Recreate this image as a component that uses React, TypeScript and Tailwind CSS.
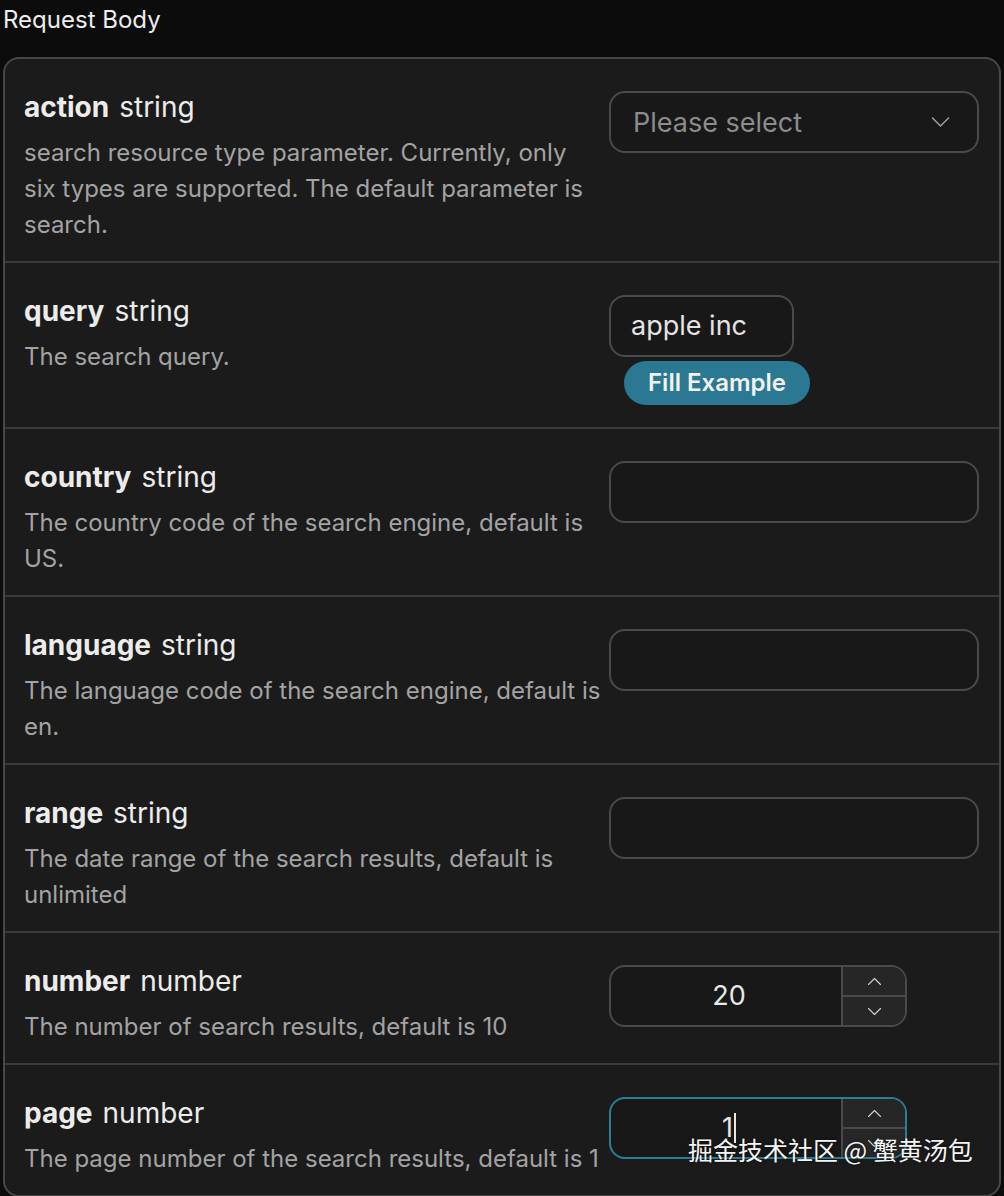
import React from "react";

const font = { fontFamily: 'Inter, "Noto Sans", "Liberation Sans", sans-serif' };

function Chevron({ up = false, className = "" }: { up?: boolean; className?: string }) {
  return (
    <svg className={className} viewBox="0 0 20 12" fill="none" stroke="currentColor" strokeWidth="1.5" strokeLinecap="round" strokeLinejoin="round">
      {up ? <path d="M2 10 L10 2 L18 10" /> : <path d="M2 2 L10 10 L18 2" />}
    </svg>
  );
}

function Row({
  name,
  type,
  desc,
  children,
  last = false,
}: {
  name: string;
  type: string;
  desc: string;
  children: React.ReactNode;
  last?: boolean;
}) {
  return (
    <div className={`flex pl-[19px] pr-[20px] ${last ? "" : "border-b-2 border-[#3a3a3a]"}`}>
      <div className="w-[579px] shrink-0 pt-[30px] pb-[18px]">
        <div className="text-[28px] leading-[36px] text-[#ececec]">
          <span className="font-bold">{name}</span>
          <span className="ml-[10px]">{type}</span>
        </div>
        <div className="mt-[10px] text-[24px] leading-[36px] text-[#a3a3a3]">{desc}</div>
      </div>
      <div className="ml-[6px] w-[370px] shrink-0 pt-[32px] pb-[22px]">{children}</div>
    </div>
  );
}

function TextInput({ value = "", w = "w-[370px]" }: { value?: string; w?: string }) {
  return (
    <div className={`${w} h-[62px] rounded-[16px] border-2 border-[#4a4a4a] bg-[#181818] flex items-center px-[20px] text-[27px] text-[#e4e4e4]`}>
      {value}
    </div>
  );
}

function NumberInput({ value, focused = false }: { value: string; focused?: boolean }) {
  return (
    <div
      className={`w-[298px] h-[62px] rounded-[16px] border-2 ${focused ? "border-[#2f7d96]" : "border-[#4a4a4a]"} bg-[#181818] flex overflow-hidden`}
    >
      <div className="flex-1 flex items-center justify-center pl-[6px] text-[27px] text-[#e8e8e8]">
        <span>{value}</span>
        {focused && <span className="inline-block w-[2px] h-[30px] bg-[#e8e8e8] ml-[1px]" />}
      </div>
      <div className="w-[64px] flex flex-col border-l-2 border-[#4a4a4a] bg-[#262626]">
        <div className="flex-1 flex items-center justify-center border-b-2 border-[#4a4a4a] text-[#d0d0d0]">
          <Chevron up className="w-[15px] h-[9px]" />
        </div>
        <div className="flex-1 flex items-center justify-center text-[#d0d0d0]">
          <Chevron className="w-[15px] h-[9px]" />
        </div>
      </div>
    </div>
  );
}

export default function App() {
  return (
    <div className="w-[1004px] h-[1196px] bg-[#0c0c0c] overflow-hidden relative" style={font}>
      <div className="h-[40px] pl-[3px] text-[24px] leading-[40px] text-[#ededed]">Request Body</div>
      <div className="mt-[17px] ml-[3px] w-[998px] rounded-[16px] border-2 border-[#474747] bg-[#1b1b1b] overflow-hidden">
        <Row
          name="action"
          type="string"
          desc="search resource type parameter. Currently, only six types are supported. The default parameter is search."
        >
          <div className="w-[370px] h-[62px] rounded-[16px] border-2 border-[#4a4a4a] bg-[#181818] flex items-center justify-between pl-[22px] pr-[26px]">
            <span className="text-[27px] text-[#8c8c8c] mt-[2px]">Please select</span>
            <Chevron className="w-[21px] h-[12px] text-[#a0a0a0]" />
          </div>
        </Row>
        <Row name="query" type="string" desc="The search query.">
          <TextInput value="apple inc" w="w-[185px]" />
          <button className="mt-[4px] ml-[15px] h-[44px] px-[24px] rounded-full bg-[#2a7891] text-[24px] font-semibold text-[#f2f2f2]">
            Fill Example
          </button>
        </Row>
        <Row name="country" type="string" desc="The country code of the search engine, default is US.">
          <TextInput />
        </Row>
        <Row name="language" type="string" desc="The language code of the search engine, default is en.">
          <TextInput />
        </Row>
        <Row name="range" type="string" desc="The date range of the search results, default is unlimited">
          <TextInput />
        </Row>
        <Row name="number" type="number" desc="The number of search results, default is 10">
          <NumberInput value="20" />
        </Row>
        <Row name="page" type="number" desc="The page number of the search results, default is 1" last>
          <NumberInput value="1" focused />
        </Row>
      </div>
      <div
        className="absolute left-[688px] top-[1132px] text-[25px] leading-[34px] text-[#f4f4f4]"
        style={{ fontFamily: '"Noto Sans CJK SC", "Noto Sans", sans-serif', textShadow: "0 0 3px rgba(0,0,0,0.6)" }}
      >
        掘金技术社区 @ 蟹黄汤包
      </div>
    </div>
  );
}
